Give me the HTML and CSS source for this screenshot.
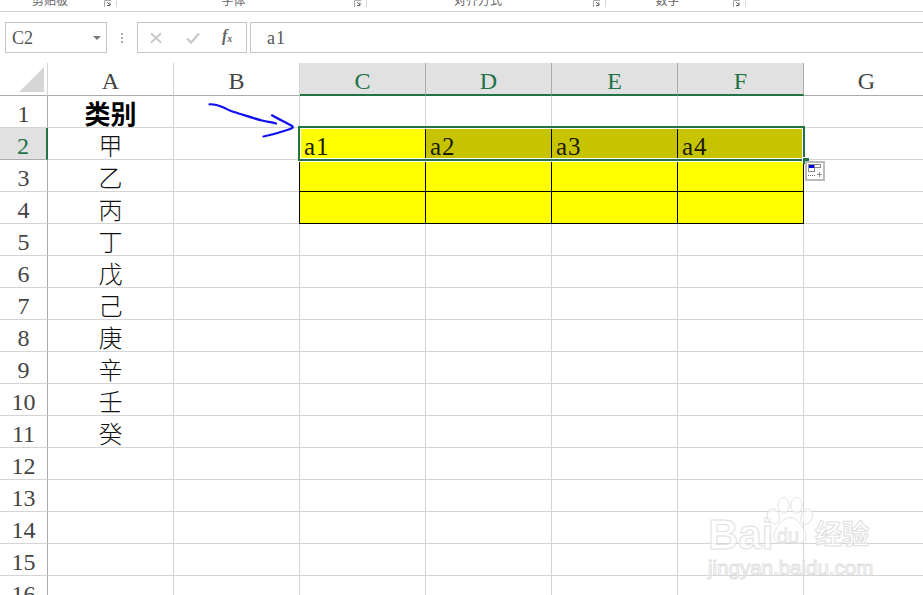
FILE: index.html
```html
<!DOCTYPE html>
<html lang="zh">
<head>
<meta charset="utf-8">
<title>Excel</title>
<link rel="stylesheet" href="styles.css">
</head>
<body>
<div class="ribbon">
  <div class="group g1"><span>剪贴板</span><svg class="launch" width="8" height="7" viewBox="0 0 8 7"><path d="M0.500 7V0.500H7" fill="none" stroke="#aaa"/><path d="M3 2l3 3M6 2.500V5.500H3" fill="none" stroke="#666"/></svg></div>
  <div class="group g2"><span>字体</span><svg class="launch" width="8" height="7" viewBox="0 0 8 7"><path d="M0.500 7V0.500H7" fill="none" stroke="#aaa"/><path d="M3 2l3 3M6 2.500V5.500H3" fill="none" stroke="#666"/></svg></div>
  <div class="group g3"><span>对齐方式</span><svg class="launch" width="8" height="7" viewBox="0 0 8 7"><path d="M0.500 7V0.500H7" fill="none" stroke="#aaa"/><path d="M3 2l3 3M6 2.500V5.500H3" fill="none" stroke="#666"/></svg></div>
  <div class="group g4"><span>数字</span><svg class="launch" width="8" height="7" viewBox="0 0 8 7"><path d="M0.500 7V0.500H7" fill="none" stroke="#aaa"/><path d="M3 2l3 3M6 2.500V5.500H3" fill="none" stroke="#666"/></svg></div>
</div>
<div class="fbar">
  <div class="namebox"><span>C2</span><i class="caret"></i></div>
  <div class="dots"><i></i><i></i><i></i></div>
  <div class="fbtns">
    <svg class="ico" width="12" height="12" viewBox="0 0 12 12"><path d="M1 1.500l10 9M11 1.500l-10 9" stroke="#c9c9c9" stroke-width="2" fill="none"/></svg>
    <svg class="ico" width="14" height="12" viewBox="0 0 14 12"><path d="M1 6.500l4 4L13 1.500" stroke="#c9c9c9" stroke-width="2.400" fill="none"/></svg>
    <span class="fx">f<sub>x</sub></span>
  </div>
  <div class="finput">a1</div>
</div>
<div class="sheet">
  <div class="grid">
    <div class="corner"><i></i></div><div class="ch">A</div><div class="ch">B</div><div class="ch on">C</div><div class="ch on">D</div><div class="ch on">E</div><div class="ch on">F</div><div class="ch">G</div>

    <div class="rh">1</div><div class="c cj title">类别</div><div class="c"></div><div class="c"></div><div class="c"></div><div class="c"></div><div class="c"></div><div class="c"></div>
    <div class="rh on">2</div><div class="c cj">甲</div><div class="c"></div><div class="c y bk t">a1</div><div class="c o bk t">a2</div><div class="c o bk t">a3</div><div class="c o bk t">a4</div><div class="c"></div>
    <div class="rh">3</div><div class="c cj">乙</div><div class="c"></div><div class="c y bk first"></div><div class="c y bk"></div><div class="c y bk"></div><div class="c y bk"></div><div class="c"></div>
    <div class="rh">4</div><div class="c cj">丙</div><div class="c"></div><div class="c y bk first"></div><div class="c y bk"></div><div class="c y bk"></div><div class="c y bk"></div><div class="c"></div>
    <div class="rh">5</div><div class="c cj">丁</div><div class="c"></div><div class="c"></div><div class="c"></div><div class="c"></div><div class="c"></div><div class="c"></div>
    <div class="rh">6</div><div class="c cj">戊</div><div class="c"></div><div class="c"></div><div class="c"></div><div class="c"></div><div class="c"></div><div class="c"></div>
    <div class="rh">7</div><div class="c cj">己</div><div class="c"></div><div class="c"></div><div class="c"></div><div class="c"></div><div class="c"></div><div class="c"></div>
    <div class="rh">8</div><div class="c cj">庚</div><div class="c"></div><div class="c"></div><div class="c"></div><div class="c"></div><div class="c"></div><div class="c"></div>
    <div class="rh">9</div><div class="c cj">辛</div><div class="c"></div><div class="c"></div><div class="c"></div><div class="c"></div><div class="c"></div><div class="c"></div>
    <div class="rh">10</div><div class="c cj">壬</div><div class="c"></div><div class="c"></div><div class="c"></div><div class="c"></div><div class="c"></div><div class="c"></div>
    <div class="rh">11</div><div class="c cj">癸</div><div class="c"></div><div class="c"></div><div class="c"></div><div class="c"></div><div class="c"></div><div class="c"></div>
    <div class="rh">12</div><div class="c"></div><div class="c"></div><div class="c"></div><div class="c"></div><div class="c"></div><div class="c"></div><div class="c"></div>
    <div class="rh">13</div><div class="c"></div><div class="c"></div><div class="c"></div><div class="c"></div><div class="c"></div><div class="c"></div><div class="c"></div>
    <div class="rh">14</div><div class="c"></div><div class="c"></div><div class="c"></div><div class="c"></div><div class="c"></div><div class="c"></div><div class="c"></div>
    <div class="rh">15</div><div class="c"></div><div class="c"></div><div class="c"></div><div class="c"></div><div class="c"></div><div class="c"></div><div class="c"></div>
    <div class="rh">16</div><div class="c"></div><div class="c"></div><div class="c"></div><div class="c"></div><div class="c"></div><div class="c"></div><div class="c"></div>
  </div>

  <div class="selection"></div>
  <div class="handle"></div>
  <div class="smart">
    <svg width="14" height="14" viewBox="0 0 14 14"><rect x="0" y="0" width="6" height="4" fill="#0000e6"/><rect x="0.500" y="0.500" width="6" height="7" fill="none" stroke="#8a8a8a"/><rect x="6.500" y="0.500" width="6" height="3" fill="#fff" stroke="#8a8a8a"/><path d="M0 11.500h1M2 11.500h1M4 11.500h1M6 11.500h1" stroke="#666"/><path d="M9 10.500h5M11.500 8v5" stroke="#8a8a8a"/></svg>
  </div>
  <svg class="arrow" width="100" height="50" viewBox="200 100 100 50"><path d="M209.500 104.300C214 104 219 105.500 223 107.300C227 109 230 111 234 112C244 115 254 118.500 263 120.800C268 122 272 122 276 123.500M272 115.300C277 118.500 286 122.500 292 126C294 127.500 292 128.500 288 129.800C280 132.500 271 135 263.500 136.500" fill="none" stroke="#1010f0" stroke-width="2.200" stroke-linecap="round" stroke-linejoin="round"/></svg>

  <div class="mark">
    <div class="brand">
      <span class="bai">Bai</span>
      <span class="paw">
        <svg width="50" height="52" viewBox="0 0 54 56"><g fill="rgba(255,255,255,.55)" stroke="#e0e0e0"><ellipse cx="9" cy="21" rx="6.500" ry="8.500" transform="rotate(-20 9 21)"/><ellipse cx="20" cy="9" rx="6" ry="8.500"/><ellipse cx="34" cy="9" rx="6" ry="8.500"/><ellipse cx="45" cy="21" rx="6" ry="8.500" transform="rotate(20 45 21)"/><path d="M27 22c7 0 10 6 14 11 5 6 5 15-3 17-4 1-7-1-11-1s-7 2-11 1c-8-2-8-11-3-17 4-5 7-11 14-11z"/></g></svg>
        <span class="du">du</span>
      </span>
      <span class="jy">经验</span>
    </div>
    <div class="url">jingyan.baidu.com</div>
  </div>
</div>
</body>
</html>
```
FILE: styles.css
```css
* { box-sizing: border-box; }
html, body { margin: 0; padding: 0; }
body {
  width: 923px;
  height: 595px;
  overflow: hidden;
  background: #fff;
  font-family: "Liberation Serif", "Noto Sans CJK SC", serif;
  color: #444;
}
i { display: block; }

/* ribbon remnant */
.ribbon {
  display: flex;
  height: 12px;
  overflow: hidden;
  border-bottom: 1px solid #d4d4d4;
}
.group {
  position: relative;
  display: flex;
  justify-content: center;
  padding-right: 16px;
  height: 7px;
  border-right: 1px solid #d8d8d8;
  font: 12px/12px "Noto Sans CJK SC", sans-serif;
  color: #666;
}
.group span { margin-top: -6px; }
.g1 { width: 117px; }
.g2 { width: 250px; }
.g3 { width: 239px; }
.g4 { width: 140px; }
.launch {
  position: absolute;
  right: 4px;
  top: 0;
}

/* formula bar */
.fbar {
  display: flex;
  align-items: stretch;
  height: 31px;
  margin: 10px 0;
  padding-left: 5px;
}
.namebox {
  display: flex;
  align-items: center;
  justify-content: space-between;
  width: 102px;
  padding: 1px 5px 0 6px;
  border: 1px solid #c4c4c4;
  font-size: 18px;
  color: #555;
}
.caret {
  width: 0;
  height: 0;
  border-left: 4px solid transparent;
  border-right: 4px solid transparent;
  border-top: 4px solid #777;
}
.dots {
  display: flex;
  flex-direction: column;
  justify-content: center;
  gap: 2px;
  width: 30px;
  align-items: center;
}
.dots i { width: 2px; height: 2px; background: #aaa; }
.fbtns {
  display: flex;
  align-items: center;
  width: 110px;
  padding-left: 12px;
  border: 1px solid #c4c4c4;
}
.ico { flex: none; }
.ico + .ico { margin-left: 24px; }
.fx {
  margin-left: 22px;
  margin-top: -3px;
  font-size: 16px;
  font-style: italic;
  font-weight: bold;
  color: #666;
  line-height: 14px;
}
.fx sub { font-size: 10px; vertical-align: -1px; line-height: 0; }
.finput {
  flex: 1;
  margin-left: 3px;
  padding-left: 16px;
  border: 1px solid #c4c4c4;
  border-right: 0;
  font-size: 18px;
  line-height: 31px;
  letter-spacing: 1px;
  color: #555;
}

/* sheet */
.sheet {
  position: relative;
  height: 532px;
  overflow: hidden;
}
.grid {
  display: grid;
  grid-template-columns: 48px repeat(7, 126px);
  grid-template-rows: 33px;
  grid-auto-rows: 32px;
  width: 930px;
}
.corner {
  display: flex;
  justify-content: flex-end;
  padding: 4px 3px 0 0;
  border-right: 1px solid #d4d4d4;
  border-bottom: 1px solid #ababab;
}
.corner i {
  width: 25px;
  height: 25px;
  background: #d6d6d6;
  clip-path: polygon(100% 0, 100% 100%, 0 100%);
}
.ch {
  display: flex;
  align-items: center;
  justify-content: center;
  padding-top: 4px;
  border-right: 1px solid #d4d4d4;
  border-bottom: 1px solid #ababab;
  font-size: 24px;
  line-height: 1;
  color: #444;
}
.ch.on {
  background: #e1e1e1;
  border-right-color: #ababab;
  border-bottom: 2px solid #217346;
  color: #217346;
}
.rh {
  display: flex;
  align-items: center;
  justify-content: center;
  padding-top: 4px;
  border-right: 1px solid #ababab;
  border-bottom: 1px solid #d4d4d4;
  font-size: 24px;
  line-height: 1;
  color: #444;
}
.rh.on {
  background: #e1e1e1;
  border-right: 2px solid #217346;
  border-bottom-color: #ababab;
  color: #217346;
}
.c {
  border-right: 1px solid #d4d4d4;
  border-bottom: 1px solid #d4d4d4;
}
.cj {
  display: flex;
  align-items: flex-end;
  justify-content: center;
  font: 300 24px/28px "Noto Sans CJK SC", sans-serif;
  color: #111;
}
.title {
  font-weight: 700;
  font-size: 26px;
  color: #000;
}
.y { background: #ffff00; }
.o { background: #c6c400; }
.bk {
  border-right-color: #000;
  border-bottom-color: #000;
}
.first { box-shadow: -1px 0 0 #000; }
.t {
  padding-left: 4px;
  font-size: 25px;
  line-height: 38px;
  letter-spacing: 1px;
  color: #1a1a00;
}

/* overlays */
.selection {
  position: absolute;
  left: 298px;
  top: 63px;
  width: 507px;
  height: 35px;
  border: 2px solid #217346;
  box-shadow: inset 0 0 0 1px #fff, 0 1px 0 #fff;
}
.handle {
  position: absolute;
  left: 802px;
  top: 94px;
  width: 7px;
  height: 7px;
  background: #217346;
  border: 1px solid #fff;
  border-right: 0;
  border-bottom: 0;
}
.smart {
  position: absolute;
  left: 805px;
  top: 98px;
  display: flex;
  align-items: center;
  justify-content: center;
  width: 20px;
  height: 20px;
  background: #fff;
  border: 2px solid #bababa;
}
.arrow {
  position: absolute;
  left: 200px;
  top: 37px;
}
.mark {
  position: absolute;
  left: 708px;
  top: 434px;
  width: 170px;
  color: rgba(255, 255, 255, .6);
  -webkit-text-stroke: 1px #e0e0e0;
  font-family: "Liberation Sans", "Noto Sans CJK SC", sans-serif;
}
.brand {
  display: flex;
  align-items: flex-end;
  height: 56px;
}
.bai {
  flex: none;
  width: 57px;
  font-size: 42px;
  font-weight: bold;
  line-height: 36px;
}
.paw {
  position: relative;
  flex: none;
  width: 50px;
  height: 56px;
}
.du {
  position: absolute;
  left: 12px;
  top: 27px;
  font-size: 20px;
  line-height: 24px;
  -webkit-text-stroke-width: .8px;
}
.jy {
  font-size: 27px;
  font-weight: bold;
  line-height: 36px;
  white-space: nowrap;
}
.url {
  margin-top: 2px;
  font-size: 20.500px;
  line-height: 26px;
  white-space: nowrap;
}
```
